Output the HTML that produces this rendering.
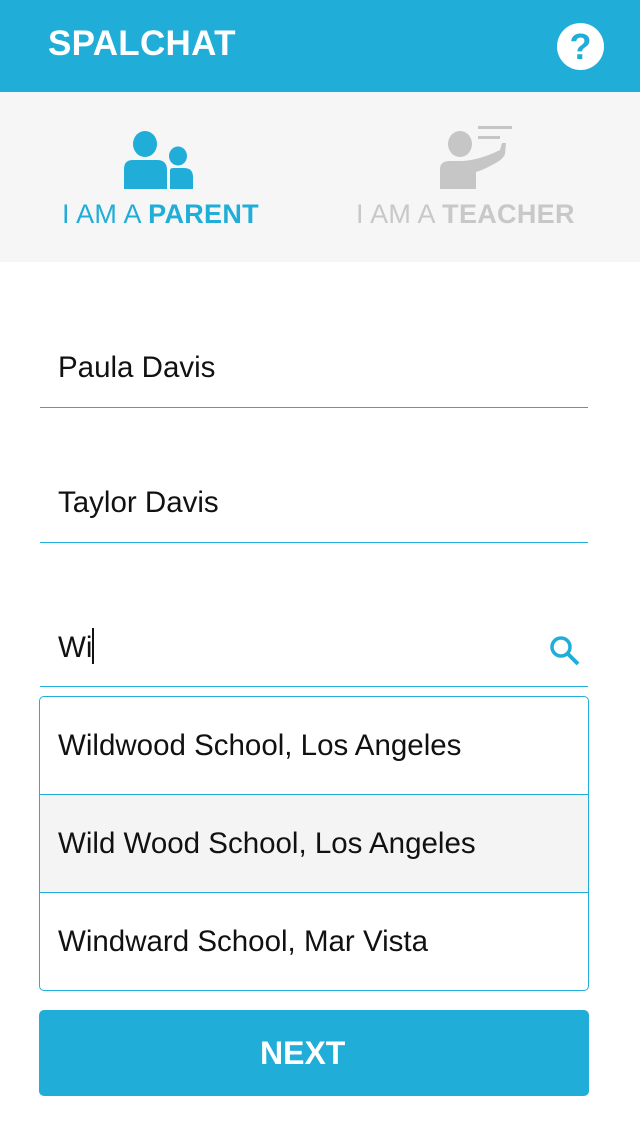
<!DOCTYPE html>
<html><head><meta charset="utf-8"><style>
*{margin:0;padding:0;box-sizing:border-box}
body{width:640px;height:1136px;background:#fff;font-family:"Liberation Sans",sans-serif;position:relative;overflow:hidden}
.hdr{position:absolute;left:0;top:0;width:640px;height:92px;background:#20aed8}
.title{position:absolute;left:48px;top:24px;color:#fff;font-weight:bold;font-size:35px;letter-spacing:0.3px}
.help{position:absolute;left:557px;top:23px;width:47px;height:47px;border-radius:50%;background:#fff;color:#20aed8;font-weight:bold;font-size:36px;text-align:center;line-height:47px}
.panel{position:absolute;left:0;top:92px;width:640px;height:170px;background:#f6f6f6}
.lbl{position:absolute;top:199px;font-size:27px;white-space:nowrap;letter-spacing:0.3px}
.f{position:absolute;left:58px;font-size:29.5px;color:#111;font-weight:300}
.line{position:absolute;left:40px;width:548px;height:1px;background:#20aed8}
.dd{position:absolute;left:39px;top:696px;width:550px;height:295px;border:1px solid #20aed8;border-radius:5px;overflow:hidden}
.row{height:98px;line-height:98px;padding-left:18px;font-size:29.5px;color:#111;border-bottom:1px solid #20aed8}
.row:last-child{border-bottom:none}
.btn{position:absolute;left:39px;top:1010px;width:550px;height:86px;background:#20aed8;border-radius:5px;color:#fff;font-weight:bold;font-size:32px;line-height:86px;padding-left:221px}
</style></head><body>
<div class="hdr"><div class="title">SPALCHAT</div><div class="help">?</div></div>
<div class="panel"></div>
<svg style="position:absolute;left:0;top:0" width="640" height="262" viewBox="0 0 640 262">
<ellipse cx="145" cy="144" rx="12" ry="13" fill="#20aed8"/>
<path d="M124 189V169Q124 160 133 160H157Q167 160 167 170V189Z" fill="#20aed8"/>
<ellipse cx="178" cy="156" rx="9" ry="9.5" fill="#20aed8"/>
<path d="M170 189V170Q170 168 174 168H184Q193 168 193 177V189Z" fill="#20aed8"/>
<rect x="478" y="126" width="34" height="3" fill="#c6c6c6"/>
<rect x="478" y="136" width="22" height="3" fill="#c6c6c6"/>
<ellipse cx="460" cy="144" rx="12" ry="13" fill="#c6c6c6"/>
<path d="M440 189V169Q440 161 450 161H462Q480 160 500 150L502 143H506L505 154Q503 160 490 166Q483 170 476 172V189Z" fill="#c6c6c6"/>
</svg>
<div class="lbl" style="left:62px;color:#20aed8">I AM A <b>PARENT</b></div>
<div class="lbl" style="left:356px;color:#c8c8c8">I AM A <b>TEACHER</b></div>
<div class="f" style="top:351px">Paula Davis</div><div class="line" style="top:407px"></div>
<div class="f" style="top:486px">Taylor Davis</div><div class="line" style="top:542px"></div>
<div class="f" style="top:628px">Wi<span style="display:inline-block;width:2px;height:36px;background:#111;vertical-align:-7px"></span></div>
<svg style="position:absolute;left:548px;top:634px" width="34" height="34" viewBox="0 0 34 34"><circle cx="13" cy="13" r="9" fill="none" stroke="#20aed8" stroke-width="3.5"/><path d="M20 20L30 30" stroke="#20aed8" stroke-width="4"/></svg>
<div class="line" style="top:686px"></div>
<div class="dd">
<div class="row">Wildwood School, Los Angeles</div>
<div class="row" style="background:#f4f4f4">Wild Wood School, Los Angeles</div>
<div class="row">Windward School, Mar Vista</div>
</div>
<div class="btn">NEXT</div>
</body></html>
